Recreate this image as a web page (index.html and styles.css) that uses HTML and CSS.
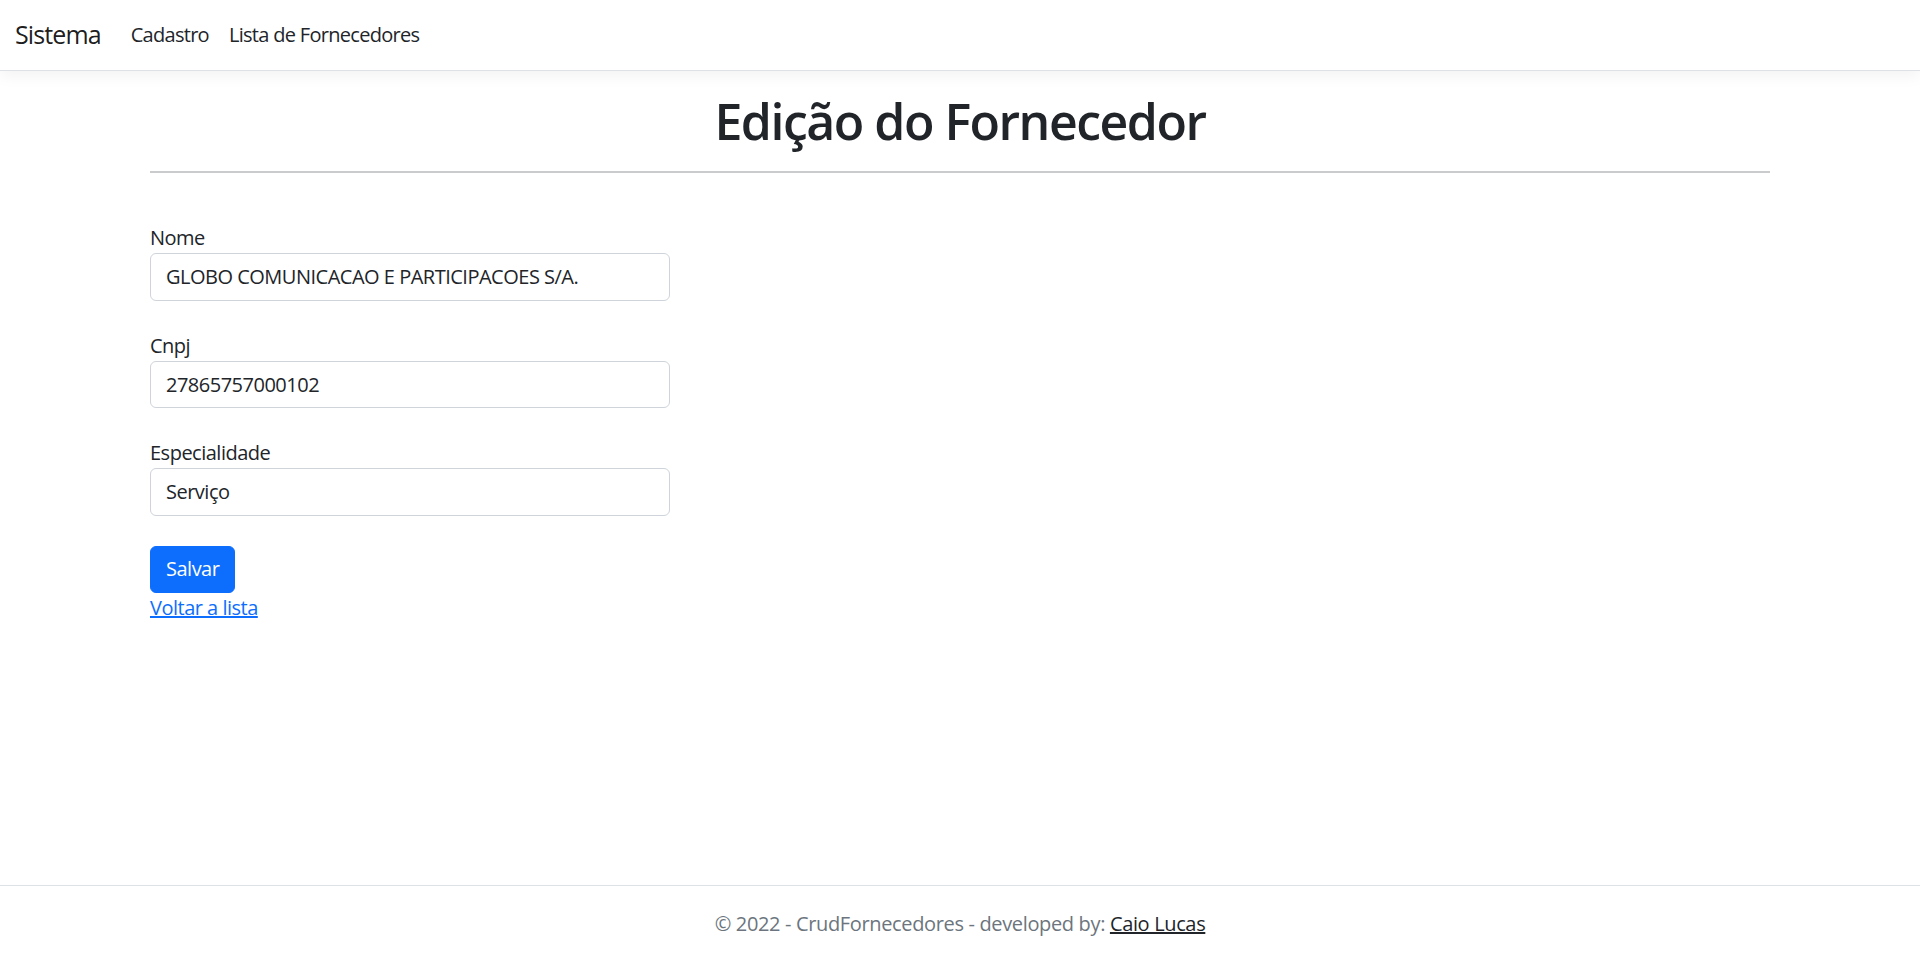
FILE: index.html
```html
<!DOCTYPE html>
<html lang="pt-BR">
<head>
<meta charset="utf-8">
<title>Edição do Fornecedor - CrudFornecedores</title>
<link rel="stylesheet" href="styles.css">
</head>
<body>
<header class="navbar">
  <a class="brand" href="#">Sistema</a>
  <nav class="nav-links">
    <a class="nav-link" href="#">Cadastro</a>
    <a class="nav-link" href="#">Lista de Fornecedores</a>
  </nav>
</header>
<main class="container">
  <h1 class="title">Edição do Fornecedor</h1>
  <hr class="divider">
  <div class="form-col">
    <form class="form">
      <div class="form-group">
        <label class="control-label" for="nome">Nome</label>
        <input class="form-control" id="nome" type="text" value="GLOBO COMUNICACAO E PARTICIPACOES S/A.">
      </div>
      <div class="form-group">
        <label class="control-label" for="cnpj">Cnpj</label>
        <input class="form-control" id="cnpj" type="text" value="27865757000102">
      </div>
      <div class="form-group">
        <label class="control-label" for="esp">Especialidade</label>
        <input class="form-control" id="esp" type="text" value="Serviço">
      </div>
      <div class="form-actions">
        <button class="btn-primary" type="button">Salvar</button>
      </div>
    </form>
    <div class="back"><a class="back-link" href="#">Voltar a lista</a></div>
  </div>
</main>
<footer class="footer">© 2022 - CrudFornecedores - developed by: <a class="footer-link" href="#">Caio Lucas</a></footer>
</body>
</html>
```

FILE: styles.css
```css
* { box-sizing: border-box; }

html, body { margin: 0; padding: 0; }

body {
  font-family: "Open Sans", "Noto Sans", Arial, sans-serif;
  font-size: 20px;
  line-height: 1.5;
  letter-spacing: -0.5px;
  color: #212529;
  background: #fff;
  min-height: 100vh;
  display: flex;
  flex-direction: column;
}

.navbar {
  display: flex;
  align-items: center;
  height: 71px;
  padding: 10px 15px;
  background: #fff;
  border-bottom: 1px solid #dee2e6;
  box-shadow: 0 5px 15px rgba(0, 0, 0, 0.05);
  margin-bottom: 20px;
  flex: none;
}

.brand {
  font-size: 25px;
  line-height: 37.5px;
  padding: 6.25px 0;
  margin-right: 20px;
  letter-spacing: -0.9px;
  color: rgba(0, 0, 0, 0.9);
  text-decoration: none;
}

.nav-links { display: flex; }

.nav-link {
  padding: 10px;
  line-height: 30px;
  letter-spacing: -0.7px;
  color: #212529;
  text-decoration: none;
}

.container {
  width: 1620px;
  margin: 0 auto;
  flex: 1 0 auto;
}

.title {
  margin: 0 0 10px;
  font-size: 50px;
  font-weight: 600;
  line-height: 1.2;
  letter-spacing: -1.5px;
  text-align: center;
}

.divider {
  margin: 20px 0;
  border: 0;
  height: 2px;
  background: #cacbcc;
}

.form-col { width: 520px; padding-top: 30px; }

.form-group { margin-bottom: 30px; }

.control-label { display: block; line-height: 30px; padding-top: 1px; margin-top: -1px; }

.form-control {
  display: block;
  width: 100%;
  height: 47.5px;
  padding: 7.5px 15px;
  font: inherit;
  letter-spacing: -0.5px;
  color: #212529;
  background: #fff;
  border: 1px solid #ced4da;
  border-radius: 6px;
}

.btn-primary {
  display: inline-block;
  height: 47.5px;
  padding: 7.5px 15px;
  font: inherit;
  letter-spacing: -0.5px;
  color: #fff;
  background: #0d6efd;
  border: 1px solid #0d6efd;
  border-radius: 6px;
}

.back { line-height: 30px; }

.back-link { color: #0d6efd; text-decoration: underline; }

.footer {
  flex: none;
  border-top: 1px solid #dee2e6;
  line-height: 75px;
  text-align: center;
  color: #6c757d;
  letter-spacing: -0.35px;
  white-space: nowrap;
}

.footer-link { color: #212529; text-decoration: underline; }
```
